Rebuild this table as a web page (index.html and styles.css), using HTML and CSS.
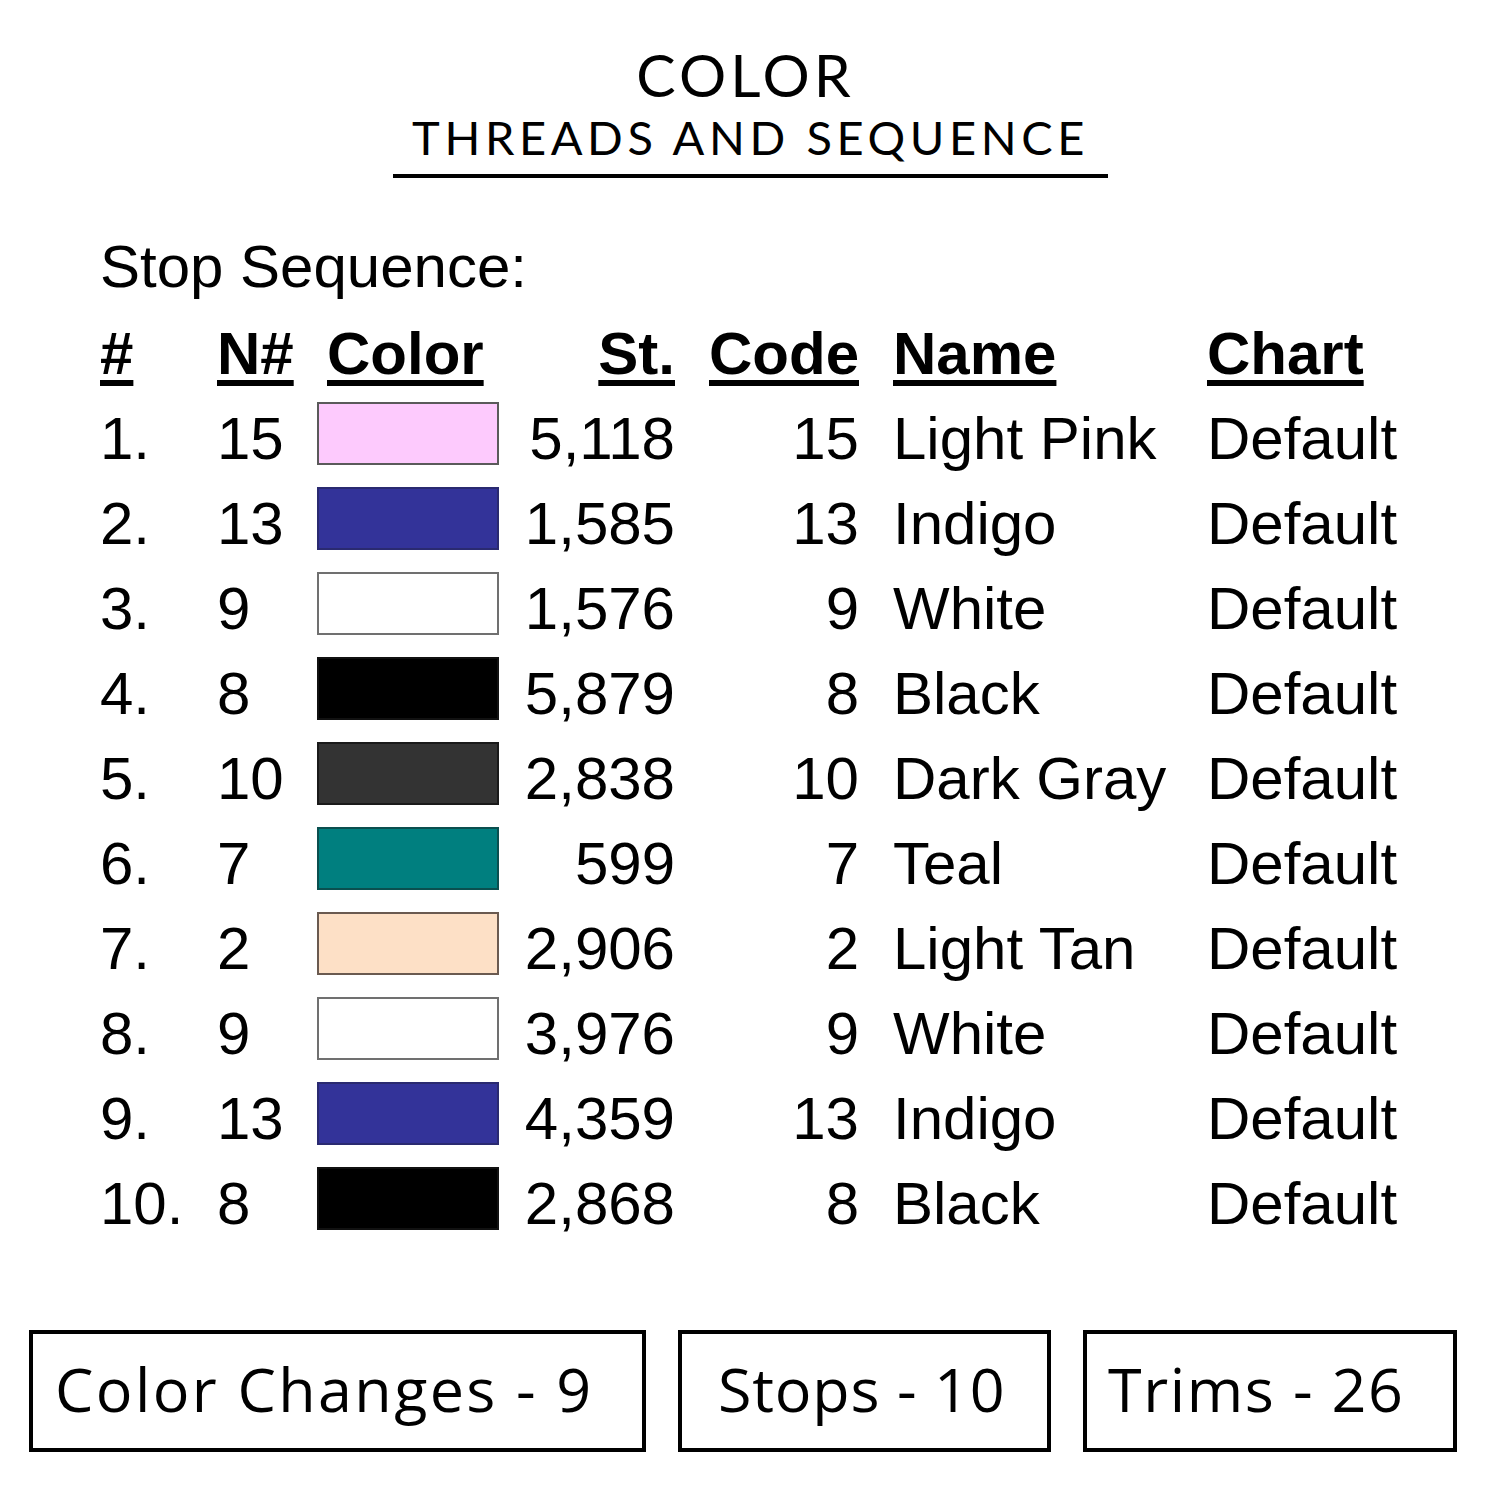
FILE: index.html
```html
<!DOCTYPE html>
<html>
<head>
<meta charset="utf-8">
<link rel="stylesheet" href="styles.css">
</head>
<body>
<div class="page">
  <header class="title">
    <div class="title-main">COLOR</div>
    <div class="title-sub">THREADS AND SEQUENCE</div>
  </header>

  <section class="sequence">
    <div class="seq-label">Stop Sequence:</div>
    <div class="seq-table">
      <div class="th">#</div><div class="th">N#</div><div class="th th-color">Color</div><div class="th num">St.</div><div class="th num">Code</div><div class="th name">Name</div><div class="th">Chart</div>

      <div class="td">1.</div><div class="td">15</div><div class="td"><span class="sw sw-pink"></span></div><div class="td num">5,118</div><div class="td num">15</div><div class="td name">Light Pink</div><div class="td">Default</div>
      <div class="td">2.</div><div class="td">13</div><div class="td"><span class="sw sw-indigo"></span></div><div class="td num">1,585</div><div class="td num">13</div><div class="td name">Indigo</div><div class="td">Default</div>
      <div class="td">3.</div><div class="td">9</div><div class="td"><span class="sw sw-white"></span></div><div class="td num">1,576</div><div class="td num">9</div><div class="td name">White</div><div class="td">Default</div>
      <div class="td">4.</div><div class="td">8</div><div class="td"><span class="sw sw-black"></span></div><div class="td num">5,879</div><div class="td num">8</div><div class="td name">Black</div><div class="td">Default</div>
      <div class="td">5.</div><div class="td">10</div><div class="td"><span class="sw sw-dgray"></span></div><div class="td num">2,838</div><div class="td num">10</div><div class="td name">Dark Gray</div><div class="td">Default</div>
      <div class="td">6.</div><div class="td">7</div><div class="td"><span class="sw sw-teal"></span></div><div class="td num">599</div><div class="td num">7</div><div class="td name">Teal</div><div class="td">Default</div>
      <div class="td">7.</div><div class="td">2</div><div class="td"><span class="sw sw-tan"></span></div><div class="td num">2,906</div><div class="td num">2</div><div class="td name">Light Tan</div><div class="td">Default</div>
      <div class="td">8.</div><div class="td">9</div><div class="td"><span class="sw sw-white"></span></div><div class="td num">3,976</div><div class="td num">9</div><div class="td name">White</div><div class="td">Default</div>
      <div class="td">9.</div><div class="td">13</div><div class="td"><span class="sw sw-indigo"></span></div><div class="td num">4,359</div><div class="td num">13</div><div class="td name">Indigo</div><div class="td">Default</div>
      <div class="td">10.</div><div class="td">8</div><div class="td"><span class="sw sw-black"></span></div><div class="td num">2,868</div><div class="td num">8</div><div class="td name">Black</div><div class="td">Default</div>
    </div>
  </section>

  <footer class="stats">
    <div class="stat stat-changes">Color Changes - 9</div>
    <div class="stat stat-stops">Stops - 10</div>
    <div class="stat stat-trims">Trims - 26</div>
  </footer>
</div>
</body>
</html>
```

FILE: styles.css
```css
html, body {
  margin: 0;
  padding: 0;
  background: #ffffff;
}

.page {
  width: 1500px;
  height: 1500px;
  box-sizing: border-box;
  color: #000;
  display: flex;
  flex-direction: column;
}

.title {
  align-self: center;
  width: 715px;
  margin-top: 40px;
  margin-left: 1px;
  border-bottom: 4px solid #000;
  font-family: Lato, "Open Sans", sans-serif;
  text-align: center;
  padding-bottom: 10px;
}

.title-main {
  font-size: 59px;
  line-height: 70px;
  letter-spacing: 4px;
  margin-left: -10px;
}

.title-sub {
  font-size: 47px;
  line-height: 54px;
  letter-spacing: 4.6px;
}

.sequence {
  padding-left: 100px;
  margin-top: 46px;
  font-family: "Liberation Sans", Arial, sans-serif;
  font-size: 60px;
}

.seq-label {
  line-height: 85px;
}

.seq-table {
  margin-top: 2px;
  display: grid;
  grid-template-columns: 117px 100px 181px 177px 184px 348px auto;
  grid-auto-rows: 85px;
}

.th {
  font-weight: bold;
  text-decoration: underline;
  text-decoration-thickness: 6px;
  text-underline-offset: 6px;
  line-height: 85px;
  white-space: nowrap;
}

.th-color {
  padding-left: 10px;
}

.td {
  line-height: 85px;
  white-space: nowrap;
}

.num {
  text-align: right;
}

.name {
  padding-left: 34px;
}

.sw {
  display: block;
  width: 182px;
  height: 63px;
  margin-top: 6px;
  box-sizing: border-box;
  border: 2px solid #5a5a5a;
}

.sw-pink { background: #fdcafd; }
.sw-indigo { background: #333399; border-color: #2a2a70; }
.sw-white { background: #ffffff; border-color: #707070; }
.sw-black { background: #000000; border-color: #111; }
.sw-dgray { background: #333333; border-color: #1a1a1a; }
.sw-teal { background: #007f7f; border-color: #0a4f4f; }
.sw-tan { background: #fde0c6; border-color: #6a5a50; }

.stats {
  margin-top: auto;
  margin-bottom: 48px;
  padding-left: 29px;
  display: flex;
  gap: 32px;
  font-family: "Open Sans", sans-serif;
  font-size: 61px;
  letter-spacing: 2.4px;
}

.stat {
  height: 122px;
  box-sizing: border-box;
  border: 4px solid #000;
  padding-bottom: 6px;
  display: flex;
  align-items: center;
  white-space: nowrap;
}

.stat-changes {
  width: 617px;
  padding-left: 22px;
}

.stat-stops {
  width: 373px;
  padding-left: 36px;
  letter-spacing: 0.8px;
}

.stat-trims {
  width: 374px;
  padding-left: 21px;
  letter-spacing: 1.6px;
}
```
